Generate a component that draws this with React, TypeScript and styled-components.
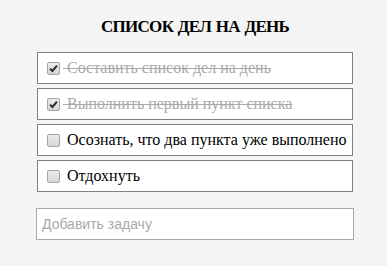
import { useState } from "react";
import styled, { createGlobalStyle } from "styled-components";

const GlobalStyle = createGlobalStyle`
    body {
        margin: 0;
        background-color: #f4f4f4;
        font-family: "Liberation Serif", "Times New Roman", serif;
    }
`;

//Styled components
const Wrapper = styled.main`
    width: 318px;
    padding: 17px 0 0 36px;
`;

const Title = styled.h1`
    margin: 0 0 15px;
    font-size: 17px;
    line-height: 20px;
    letter-spacing: -0.7px;
    word-spacing: 1px;
    font-weight: 700;
    text-align: center;
    color: #000;
`;

const List = styled.ul`
    list-style: none;
    margin: 0 1px 16px;
    padding: 0;
    display: flex;
    flex-flow: column;
    gap: 4px;
`;

const Item = styled.li`
    box-sizing: border-box;
    height: 32px;
    display: flex;
    align-items: center;
    padding-left: 9px;
    background-color: #fff;
    border: 1px solid #808080;
`;

const Label = styled.label<{ $done: boolean }>`
    display: flex;
    align-items: center;
    font-size: 16px;
    white-space: pre;
    color: ${(p) => (p.$done ? "#aaa" : "#000")};
    text-decoration: ${(p) => (p.$done ? "line-through" : "none")};
    cursor: pointer;
`;

const Box = styled.span`
    box-sizing: border-box;
    width: 13px;
    height: 13px;
    margin: 0 3px 0 0;
    display: flex;
    align-items: center;
    justify-content: center;
    border: 1px solid #a3a3a3;
    border-radius: 2px;
    background: linear-gradient(#ececec, #d6d6d6);
`;

const HiddenInput = styled.input`
    display: none;
`;

const TaskInput = styled.input`
    box-sizing: border-box;
    display: block;
    width: 318px;
    height: 32px;
    margin: 0;
    padding: 0 5px;
    border: 1px solid #a9a9a9;
    background-color: #fff;
    font-family: "Liberation Sans", Arial, sans-serif;
    font-size: 14px;
    outline: none;

    &::placeholder {
        color: #a9a9a9;
    }
`;

type Task = { id: number; text: string; done: boolean };

const initialTasks: Task[] = [
    { id: 1, text: "Составить список дел на день", done: true },
    { id: 2, text: "Выполнить первый пункт списка", done: true },
    { id: 3, text: "Осознать, что два пункта уже выполнено", done: false },
    { id: 4, text: "Отдохнуть", done: false },
];

export default function App() {
    const [tasks, setTasks] = useState(initialTasks);

    const toggle = (id: number) =>
        setTasks(tasks.map((t) => (t.id === id ? { ...t, done: !t.done } : t)));

    return (
        <>
            <GlobalStyle />
            <Wrapper>
                <Title>СПИСОК ДЕЛ НА ДЕНЬ</Title>
                <List>
                    {tasks.map((task) => (
                        <Item key={task.id}>
                            <Label $done={task.done}>
                                <HiddenInput type="checkbox" checked={task.done} onChange={() => toggle(task.id)} />
                                <Box>
                                    {task.done && (
                                        <svg width="9" height="9" viewBox="0 0 9 9">
                                            <path d="M1 4.6 L3.4 7 L8 1.6" fill="none" stroke="#2b2b2b" strokeWidth="2" />
                                        </svg>
                                    )}
                                </Box>
                                {" " + task.text}
                            </Label>
                        </Item>
                    ))}
                </List>
                <TaskInput placeholder="Добавить задачу" />
            </Wrapper>
        </>
    );
}
